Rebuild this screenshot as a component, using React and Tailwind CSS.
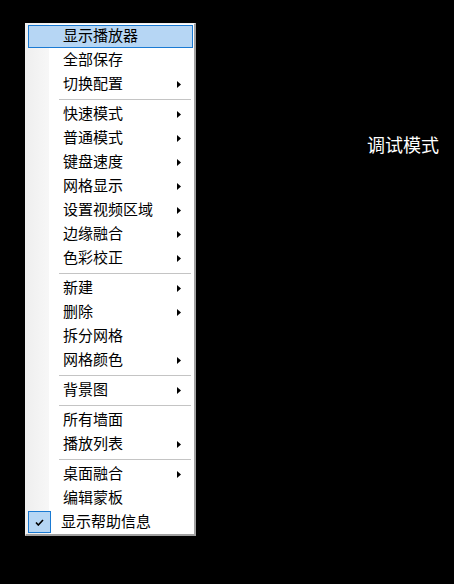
const FONT = { fontFamily: '"Noto Sans CJK SC", "Noto Sans", sans-serif' }

const GROUPS = [
  [
    { label: '显示播放器', hot: true },
    { label: '全部保存' },
    { label: '切换配置', sub: true },
  ],
  [
    { label: '快速模式', sub: true },
    { label: '普通模式', sub: true },
    { label: '键盘速度', sub: true },
    { label: '网格显示', sub: true },
    { label: '设置视频区域', sub: true },
    { label: '边缘融合', sub: true },
    { label: '色彩校正', sub: true },
  ],
  [
    { label: '新建', sub: true },
    { label: '删除', sub: true },
    { label: '拆分网格' },
    { label: '网格颜色', sub: true },
  ],
  [{ label: '背景图', sub: true }],
  [
    { label: '所有墙面' },
    { label: '播放列表', sub: true },
  ],
  [
    { label: '桌面融合', sub: true },
    { label: '编辑蒙板' },
    { label: '显示帮助信息', checked: true },
  ],
]

function Arrow() {
  return (
    <svg width="4" height="7" viewBox="0 0 4 7" className="ml-auto mr-[12px] shrink-0">
      <polygon points="0,0 4,3.5 0,7" fill="#000" />
    </svg>
  )
}

function Item({ item }) {
  return (
    <div className="h-[24px] flex items-center">
      <div
        className={
          'flex items-center w-full h-[23px] ' +
          (item.hot ? 'bg-[#b6d6f4] border border-[#1a7ad3] ml-px' : '')
        }
      >
        {/* gutter cell */}
        <div className={'shrink-0 h-full flex items-center ' + (item.hot ? 'w-[23px]' : 'w-[24px]')}>
          {item.checked && (
            <div className="w-[25px] h-[22px] ml-px bg-[#b6d6f4] border border-[#1a7ad3] flex items-center justify-center">
              <svg width="9" height="7" viewBox="0 0 9 7">
                <path d="M1 3.5 L3.3 6 L8 1" fill="none" stroke="#000" strokeWidth="1.6" />
              </svg>
            </div>
          )}
        </div>
        <span
          className={
            'text-[15px] leading-none mb-[3px] text-black whitespace-nowrap ' +
            (item.checked ? 'ml-[10px]' : item.hot ? 'ml-[11px]' : 'ml-[12px]')
          }
        >
          {item.label}
        </span>
        {item.sub && <Arrow />}
      </div>
    </div>
  )
}

export default function App() {
  return (
    <div className="w-[454px] h-[584px] bg-black flex items-start" style={FONT}>
      <div
        className="ml-[25px] mt-[23px] w-[171px] border-l border-t border-[#f0f0f0] border-r-2 border-b-2 border-r-[#a0a0a0] border-b-[#a0a0a0] px-px bg-[linear-gradient(to_right,#efefef_0px,#f7f7f7_23px,#ffffff_23px)]"
      >
        {GROUPS.map((group, gi) => (
          <div key={gi}>
            {gi > 0 && (
              <div className="h-[6px] flex items-center">
                <div className="ml-[32px] mr-[2px] h-px w-full bg-[#c4c4c4]" />
              </div>
            )}
            {group.map(item => (
              <Item key={item.label} item={item} />
            ))}
          </div>
        ))}
      </div>
      <div className="ml-[171px] mt-[132px] text-[18px] leading-[24px] text-white whitespace-nowrap">
        调试模式
      </div>
    </div>
  )
}
